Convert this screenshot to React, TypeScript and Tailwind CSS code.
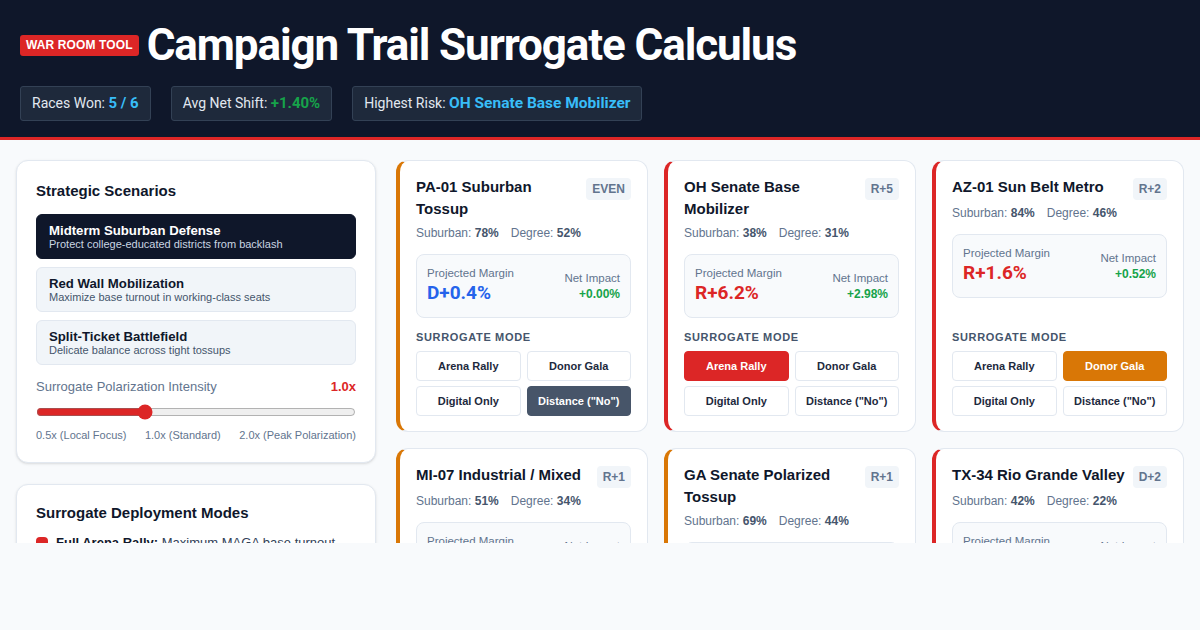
import React, { useState } from 'react';

type Mode = 'Arena Rally' | 'Donor Gala' | 'Digital Only' | 'Distance ("No")';

type Race = {
  id: string;
  name: string;
  lean: string;
  suburban: number;
  degree: number;
  margin: string;
  marginColor: string;
  impact: string;
  accent: string;
  mode: Mode;
};

const modes: Mode[] = ['Arena Rally', 'Donor Gala', 'Digital Only', 'Distance ("No")'];

const activeModeClass: Record<Mode, string> = {
  'Arena Rally': 'bg-[#dc2626] border-[#dc2626] text-white',
  'Donor Gala': 'bg-[#d97706] border-[#d97706] text-white',
  'Digital Only': 'bg-[#2563eb] border-[#2563eb] text-white',
  'Distance ("No")': 'bg-[#475569] border-[#475569] text-white',
};

const initialRaces: Race[] = [
  { id: 'pa01', name: 'PA-01 Suburban Tossup', lean: 'EVEN', suburban: 78, degree: 52, margin: 'D+0.4%', marginColor: 'text-[#2563eb]', impact: '+0.00%', accent: 'border-l-[#d97706]', mode: 'Distance ("No")' },
  { id: 'oh', name: 'OH Senate Base Mobilizer', lean: 'R+5', suburban: 38, degree: 31, margin: 'R+6.2%', marginColor: 'text-[#dc2626]', impact: '+2.98%', accent: 'border-l-[#dc2626]', mode: 'Arena Rally' },
  { id: 'az01', name: 'AZ-01 Sun Belt Metro', lean: 'R+2', suburban: 84, degree: 46, margin: 'R+1.6%', marginColor: 'text-[#dc2626]', impact: '+0.52%', accent: 'border-l-[#dc2626]', mode: 'Donor Gala' },
  { id: 'mi07', name: 'MI-07 Industrial / Mixed', lean: 'R+1', suburban: 51, degree: 34, margin: 'R+0.6%', marginColor: 'text-[#dc2626]', impact: '-0.40%', accent: 'border-l-[#d97706]', mode: 'Digital Only' },
  { id: 'ga', name: 'GA Senate Polarized Tossup', lean: 'R+1', suburban: 69, degree: 44, margin: 'R+0.3%', marginColor: 'text-[#dc2626]', impact: '-0.70%', accent: 'border-l-[#d97706]', mode: 'Distance ("No")' },
  { id: 'tx34', name: 'TX-34 Rio Grande Valley', lean: 'D+2', suburban: 42, degree: 22, margin: 'R+1.2%', marginColor: 'text-[#dc2626]', impact: '+3.20%', accent: 'border-l-[#dc2626]', mode: 'Arena Rally' },
];

const scenarios = [
  { title: 'Midterm Suburban Defense', desc: 'Protect college-educated districts from backlash' },
  { title: 'Red Wall Mobilization', desc: 'Maximize base turnout in working-class seats' },
  { title: 'Split-Ticket Battlefield', desc: 'Delicate balance across tight tossups' },
];

const RaceCard: React.FC<{ race: Race; onMode: (m: Mode) => void }> = ({ race, onMode }) => (
  <div className={`flex flex-col bg-white border border-slate-200 border-l-4 ${race.accent} rounded-xl px-4 pt-[15px] pb-[15px]`}>
    <div className="flex items-start justify-between gap-1.5">
      <h3 className="text-[15px] leading-[22px] font-bold text-slate-900">{race.name}</h3>
      <span className="shrink-0 bg-slate-100 text-slate-500 text-[12px] font-bold rounded px-1.5 py-[3px] leading-4 mt-[2px]">
        {race.lean}
      </span>
    </div>
    <div className="mt-[4px] text-[12px] text-slate-500 flex gap-3">
      <span>
        Suburban: <b className="text-slate-600">{race.suburban}%</b>
      </span>
      <span>
        Degree: <b className="text-slate-600">{race.degree}%</b>
      </span>
    </div>
    <div className="mt-[12px] bg-slate-50 border border-slate-200 rounded-lg px-[10px] pt-[11px] pb-[11px] flex items-center justify-between">
      <div>
        <div className="text-[11.5px] leading-[14px] text-slate-500">Projected Margin</div>
        <div
          className={`text-[19px] leading-[26px] font-bold ${race.marginColor}`}
          style={{ fontFamily: 'Roboto, "Liberation Sans", sans-serif' }}
        >
          {race.margin}
        </div>
      </div>
      <div className="text-right">
        <div className="text-[11.5px] leading-[14px] text-slate-500">Net Impact</div>
        <div className="text-[12px] leading-[16px] font-bold text-[#16a34a] mt-[1px]">{race.impact}</div>
      </div>
    </div>
    <div className="mt-auto pt-[12px]">
      <div className="text-[11px] font-bold uppercase tracking-[0.06em] text-slate-600 leading-[14px]">
        Surrogate Mode
      </div>
      <div className="grid grid-cols-2 gap-x-[6px] gap-y-[5px] mt-[7px]">
        {modes.map((m) => (
          <button
            key={m}
            onClick={() => onMode(m)}
            className={`h-[30px] rounded-[4px] border text-[11px] font-bold ${
              race.mode === m ? activeModeClass[m] : 'bg-white border-slate-200 text-slate-800'
            }`}
          >
            {m}
          </button>
        ))}
      </div>
    </div>
  </div>
);

export default function App() {
  const [races, setRaces] = useState<Race[]>(initialRaces);
  const [scenario, setScenario] = useState(0);
  const [intensity, setIntensity] = useState(1.0);

  const setMode = (id: string, m: Mode) =>
    setRaces((prev) => prev.map((r) => (r.id === id ? { ...r, mode: m } : r)));

  return (
    <div className="min-h-screen bg-slate-50" style={{ fontFamily: '"Liberation Sans", Arial, sans-serif' }}>
      <div className="h-[543px] overflow-hidden">
        <header className="bg-[#0f172a] border-b-[3px] border-[#dc2626] px-5 pt-[20px] pb-4">
          <div className="flex items-center gap-2 h-[50px]">
            <span className="bg-[#dc2626] text-white text-[12px] font-bold tracking-[0.01em] rounded-[3px] px-[6px] py-[3px] leading-[15px] mt-[1px]">
              WAR ROOM TOOL
            </span>
            <h1
              className="text-white text-[44px] font-bold leading-[50px] tracking-[-0.025em]"
              style={{ fontFamily: 'Roboto, "Liberation Sans", sans-serif' }}
            >
              Campaign Trail Surrogate Calculus
            </h1>
          </div>
          <div className="flex gap-5 mt-4" style={{ fontFamily: 'Roboto, "Liberation Sans", sans-serif' }}>
            <div className="bg-[#1e293b] border border-[#334155] rounded-[3px] h-[35px] px-[11px] flex items-center text-[14px] text-slate-200">
              Races Won:&nbsp;<b className="text-[#38bdf8] text-[15px]">5 / 6</b>
            </div>
            <div className="bg-[#1e293b] border border-[#334155] rounded-[3px] h-[35px] px-[11px] flex items-center text-[14px] text-slate-200">
              Avg Net Shift:&nbsp;<b className="text-[#16a34a] text-[15px]">+1.40%</b>
            </div>
            <div className="bg-[#1e293b] border border-[#334155] rounded-[3px] h-[35px] px-[11px] flex items-center text-[14px] text-slate-200">
              Highest Risk:&nbsp;<b className="text-[#38bdf8] text-[15.5px]">OH Senate Base Mobilizer</b>
            </div>
          </div>
        </header>

        <main className="flex gap-5 px-4 pt-5">
          <aside className="w-[360px] shrink-0 flex flex-col gap-[21px]">
            <section className="bg-white border border-slate-200 rounded-xl px-[19px] pt-[19px] pb-5 shadow-sm">
              <h2 className="text-[15px] font-bold text-slate-900 leading-[22px]">Strategic Scenarios</h2>
              <div className="mt-[12px] flex flex-col gap-2">
                {scenarios.map((s, i) => (
                  <button
                    key={s.title}
                    onClick={() => setScenario(i)}
                    className={`text-left rounded-md border px-3 h-[45px] flex flex-col justify-center ${
                      scenario === i ? 'bg-[#0f172a] border-[#0f172a]' : 'bg-slate-100 border-slate-200'
                    }`}
                  >
                    <span className={`text-[13.2px] font-bold leading-[15px] ${scenario === i ? 'text-white' : 'text-slate-900'}`}>
                      {s.title}
                    </span>
                    <span className={`text-[11px] leading-[13px] ${scenario === i ? 'text-slate-300' : 'text-slate-600'}`}>
                      {s.desc}
                    </span>
                  </button>
                ))}
              </div>
              <div className="mt-[13px] flex justify-between items-center text-[13px] leading-[18px]">
                <span className="text-slate-500">Surrogate Polarization Intensity</span>
                <span className="text-[#dc2626] font-bold">{intensity.toFixed(1)}x</span>
              </div>
              <input
                type="range"
                min={0.5}
                max={2}
                step={0.1}
                value={intensity}
                onChange={(e) => setIntensity(parseFloat(e.target.value))}
                className="w-full accent-[#dc2626] mt-[8px] block"
              />
              <div className="mt-[8px] flex justify-between text-[11px] text-slate-500 leading-[14px]">
                <span>0.5x (Local Focus)</span>
                <span>1.0x (Standard)</span>
                <span>2.0x (Peak Polarization)</span>
              </div>
            </section>

            <section className="bg-white border border-slate-200 rounded-xl px-[19px] pt-[17px] pb-5 shadow-sm">
              <h2 className="text-[15px] font-bold text-slate-900 leading-[22px]">Surrogate Deployment Modes</h2>
              <ul className="mt-[10px] flex flex-col gap-2 text-[13px] leading-[18px] text-slate-700">
                <li className="flex items-start gap-2">
                  <span className="w-3 h-3 rounded-sm bg-[#dc2626] mt-[3px] shrink-0" />
                  <span>
                    <b className="text-slate-900">Full Arena Rally:</b> Maximum MAGA base turnout, suburban backlash risk
                  </span>
                </li>
                <li className="flex items-start gap-2">
                  <span className="w-3 h-3 rounded-sm bg-[#d97706] mt-[3px] shrink-0" />
                  <span>
                    <b className="text-slate-900">Donor Gala:</b> Quiet fundraising, minimal voter exposure
                  </span>
                </li>
              </ul>
            </section>
          </aside>

          <div className="flex-1 grid grid-cols-3 gap-4 content-start">
            {races.map((r) => (
              <RaceCard key={r.id} race={r} onMode={(m) => setMode(r.id, m)} />
            ))}
          </div>
        </main>
      </div>
    </div>
  );
}
